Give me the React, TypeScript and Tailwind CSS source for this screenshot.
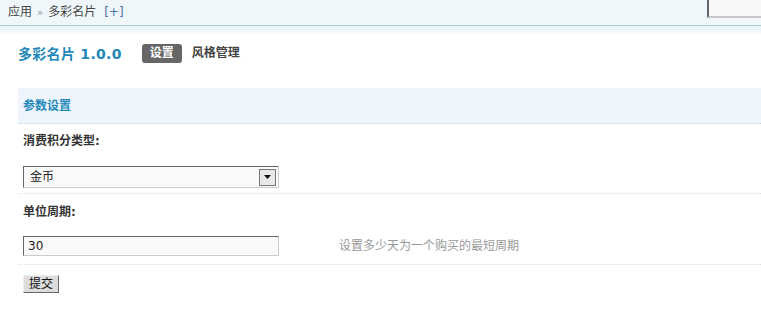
const font = { fontFamily: '"DejaVu Sans", "Noto Sans CJK SC", sans-serif' };

const App = () => {
  return (
    <div className="min-h-screen w-[761px] bg-white text-[12px] text-[#333]" style={font}>
      {/* top bar */}
      <div className="flex h-[26px] justify-between border-b border-[#aacfcf] bg-[#eff7fa]">
        <div className="flex items-center pl-2 leading-[25px] text-[#444]">
          <span>应用</span>
          <span className="mx-[5px] text-[10px] text-[#999]">»</span>
          <span>多彩名片</span>
          <span className="ml-2 text-[#4a6fa5]">[+]</span>
        </div>
        <div className="h-[18px] w-[54px] border-b-2 border-l-2 border-b-[#c8c8c8] border-l-[#666] bg-[#f7f7f7]" />
      </div>
      <div className="h-[10px] bg-gradient-to-b from-[#e3f0fa] to-white" />

      <div className="pl-[18px]">
        {/* title */}
        <div className="flex h-[52px] items-start pt-[8px]">
          <h1 className="text-[14px] leading-[20px] font-bold tracking-[0.3px] text-[#2288b8]">多彩名片 1.0.0</h1>
          <span className="ml-[20px] rounded-[3px] bg-[#666] px-[8px] text-[12px] leading-[19px] font-bold text-white">
            设置
          </span>
          <span className="ml-[10px] text-[12px] leading-[19px] font-bold text-[#444]">风格管理</span>
        </div>

        {/* section header */}
        <div className="flex h-[36px] items-center border-b border-dotted border-[#ccd] bg-[#eef5fc] pl-[5px]">
          <h2 className="mt-[1px] text-[12px] font-bold text-[#2288b8]">参数设置</h2>
        </div>

        {/* row 1 */}
        <div className="border-b border-dotted border-[#ddd] px-[5px] pt-[8px] pb-[5px]">
          <div className="text-[12px] leading-[18px] font-bold text-[#333]">消费积分类型:</div>
          <div className="mt-[16px] flex h-[22px] w-[256px] items-center justify-between border border-t-[#666] border-l-[#666] border-r-[#ccc] border-b-[#ccc] bg-[#fafafa] pl-[6px] pr-[2px]">
            <span className="text-[12px] text-[#222]">金币</span>
            <span className="flex h-[17px] w-[17px] items-center justify-center border border-[#777] bg-[#e8e8e8]">
              <svg width="7" height="4" viewBox="0 0 7 4">
                <path d="M0 0h7L3.5 4z" fill="#111" />
              </svg>
            </span>
          </div>
        </div>

        {/* row 2 */}
        <div className="border-b border-dotted border-[#ddd] px-[5px] pt-[9px] pb-[8px]">
          <div className="text-[12px] leading-[18px] font-bold text-[#333]">单位周期:</div>
          <div className="mt-[15px] flex items-center">
            <div className="flex h-[20px] w-[256px] items-center border border-t-[#666] border-l-[#666] border-r-[#ccc] border-b-[#ccc] bg-[#fafafa] pl-[4px] text-[12px] text-[#222]">
              30
            </div>
            <span className="ml-[60px] text-[12px] text-[#999]">设置多少天为一个购买的最短周期</span>
          </div>
        </div>

        {/* submit */}
        <div className="px-[5px] pt-[10px]">
          <button className="h-[18px] border border-t-[#eee] border-l-[#eee] border-r-[#666] border-b-[#666] bg-[#ddd] px-[5px] text-[12px] leading-[16px] text-[#111]">
            提交
          </button>
        </div>
      </div>
    </div>
  );
};

export default App;
